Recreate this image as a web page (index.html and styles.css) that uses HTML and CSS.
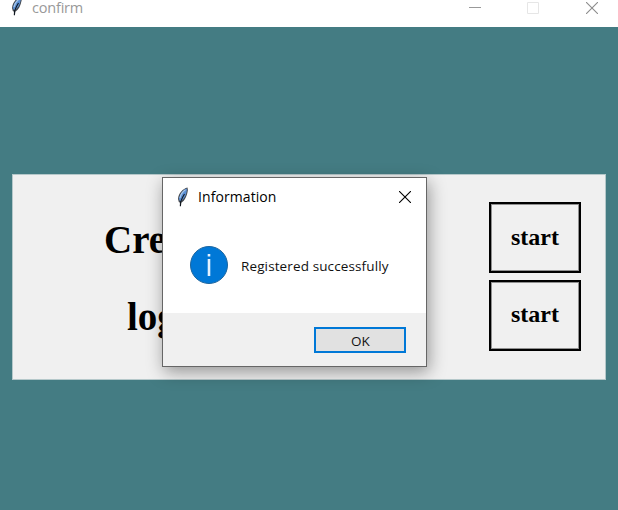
FILE: index.html
```
<!DOCTYPE html>
<html lang="en">
<head>
<meta charset="utf-8">
<title>confirm</title>
<link rel="stylesheet" href="styles.css">
</head>
<body>
<svg class="defs" aria-hidden="true">
  <symbol id="feather" viewBox="0 0 12 20">
    <path d="M10.500.5C6 1.500 1.500 6 1 12l.8 3 1.300.8-.2 3.700 1-.2.5-3.500C8 13.500 10 9 10.900 3z" fill="#45494f"/>
    <path d="M10 1.500C6.500 2.500 2.500 7 1.900 12l1.300 2.500C7 12.500 9.700 8 10 1.500z" fill="#5b90d6"/>
    <path d="M8.500 2.800C5.500 4.800 3.500 8 3 11" fill="none" stroke="#a9c7e9" stroke-width="1.200"/>
    <path d="M7.500 7 5.500 10.500l-2 4.500-.1 4" fill="none" stroke="#111820" stroke-width="1.100"/>
  </symbol>
</svg>
<header class="titlebar">
  <svg class="feather"><use href="#feather"/></svg>
  <span class="title">confirm</span>
  <div class="controls">
    <svg width="12" height="12" viewBox="0 0 12 12"><path d="M0 5.500h12" stroke="#999"/></svg>
    <svg width="12" height="12" viewBox="0 0 12 12"><path d="M.5.5h11v11H.5z" fill="none" stroke="#e6e6e6"/></svg>
    <svg width="12" height="12" viewBox="0 0 12 12"><path d="M0 0l12 12M12 0L0 12" stroke="#8c8c8c" stroke-width="1.100"/></svg>
  </div>
</header>
<main class="client">
  <section class="panel">
    <div class="row"><h1 class="create">Create</h1><button class="start">start</button></div>
    <div class="row"><h1 class="login">login</h1><button class="start">start</button></div>
  </section>
</main>
<div class="dialog" role="dialog">
  <div class="dialog-head">
    <svg class="feather"><use href="#feather"/></svg>
    <span class="dialog-title">Information</span>
    <svg class="close" width="12" height="12" viewBox="0 0 12 12"><path d="M0 0l12 12M12 0L0 12" stroke="#000" stroke-width="1.100"/></svg>
  </div>
  <div class="dialog-body">
    <svg width="40" height="40" viewBox="0 0 40 40"><circle cx="20" cy="20" r="18.500" fill="#0078d7" stroke="#1c659f"/><path d="M18.700 9h2.600v2.500h-2.600zM18.700 14h2.600v17h-2.600z" fill="#e4f2ff"/></svg>
    <span class="message">Registered successfully</span>
  </div>
  <div class="dialog-foot"><button class="ok">OK</button></div>
</div>
</body>
</html>
```

FILE: styles.css
```
* { box-sizing: border-box; }
body {
  margin: 0;
  width: 618px;
  height: 510px;
  overflow: hidden;
  background: #447c83;
  font-family: "Open Sans", "Noto Sans", sans-serif;
}
.defs { position: absolute; width: 0; height: 0; }
.titlebar {
  display: flex;
  height: 27px;
  background: #fff;
  padding-left: 11px;
}
.feather { width: 12px; height: 20px; flex: none; }
.titlebar .feather { margin-top: -4px; }
.title {
  margin-left: 9px;
  line-height: 16px;
  font-size: 14.500px;
  letter-spacing: -.2px;
  color: #999;
}
.controls {
  display: flex;
  gap: 46px;
  margin: 2px 20px 0 auto;
}
.controls svg:not(:last-child) { margin-left: -1px; margin-right: 1px; }
.client { height: 483px; padding: 147px 12px 0; }
.panel {
  width: 594px;
  height: 206px;
  padding: 27px 24px 0 0;
  background: #f0f0f0;
  border: 1px solid #b5c8ca;
}
.row {
  display: flex;
  align-items: center;
  height: 71px;
  margin-bottom: 6px;
}
.row + .row { padding-top: 1px; }
h1 {
  margin: 4px 0 0;
  font: bold 39px/44px "Liberation Serif", serif;
}
.create { margin-left: 91px; }
.login { margin-left: 114px; }
.start {
  width: 92px;
  height: 71px;
  margin-left: auto;
  padding: 0 0 2px;
  border: 2px solid #000;
  outline: 1px solid rgba(0, 0, 0, .4);
  outline-offset: -3px;
  background: #f0f0f0;
  color: #000;
  font: bold 24px/26px "Liberation Serif", serif;
}
.dialog {
  position: absolute;
  left: 162px;
  top: 177px;
  width: 265px;
  height: 190px;
  display: flex;
  flex-direction: column;
  border: 1px solid #666;
  background: #fff;
  box-shadow: 2px 5px 16px rgba(0, 0, 0, .38);
}
.dialog-head {
  display: flex;
  align-items: center;
  height: 37px;
  padding: 0 15px 0 14px;
}
.dialog-title { margin-left: 9px; font-size: 14px; letter-spacing: .08px; color: #000; }
.close { margin-left: auto; }
.dialog-body {
  display: flex;
  flex: 1;
  align-items: center;
  padding: 1px 0 0 26px;
}
.message { margin: 2px 0 0 12px; font-size: 13.500px; letter-spacing: .12px; color: #111; white-space: nowrap; }
.dialog-foot {
  display: flex;
  justify-content: flex-end;
  height: 53px;
  padding: 14px 20px 0 0;
  background: #f0f0f0;
}
.ok {
  width: 92px;
  height: 26px;
  padding: 2px 0 0 1px;
  border: 2px solid #0078d7;
  background: #e1e1e1;
  color: #111;
  font: 13.500px/20px "Open Sans", sans-serif;
}
```
